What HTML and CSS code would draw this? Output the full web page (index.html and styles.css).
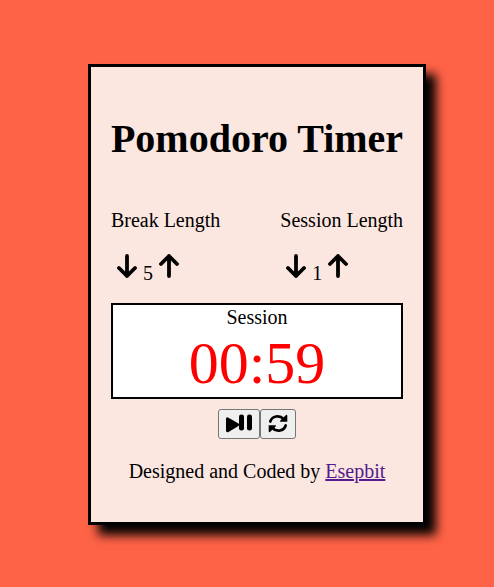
FILE: index.html
```html
<!DOCTYPE html>
<html lang="en">
<head>
<meta charset="utf-8">
<meta name="viewport" content="width=device-width, initial-scale=1">
<title>Pomodoro Timer</title>
<link rel="stylesheet" href="styles.css">
</head>
<body>
<main class="card">
  <h1 class="title">Pomodoro Timer</h1>
  <div class="settings">
    <section class="setting">
      <p class="label">Break Length</p>
      <div class="stepper">
        <button class="arrow" type="button" aria-label="Decrease break length"><svg viewBox="0 0 20 24"><path d="M10 2v20M2 14l8 8 8-8"/></svg></button>
        <span class="value">5</span>
        <button class="arrow" type="button" aria-label="Increase break length"><svg viewBox="0 0 20 24"><path d="M10 22V2M2 10l8-8 8 8"/></svg></button>
      </div>
    </section>
    <section class="setting">
      <p class="label">Session Length</p>
      <div class="stepper">
        <button class="arrow" type="button" aria-label="Decrease session length"><svg viewBox="0 0 20 24"><path d="M10 2v20M2 14l8 8 8-8"/></svg></button>
        <span class="value">1</span>
        <button class="arrow" type="button" aria-label="Increase session length"><svg viewBox="0 0 20 24"><path d="M10 22V2M2 10l8-8 8 8"/></svg></button>
      </div>
    </section>
  </div>
  <div class="display">
    <div class="phase">Session</div>
    <div class="time">00:59</div>
  </div>
  <div class="controls">
    <button class="control" type="button" aria-label="Start or pause"><svg class="play" viewBox="0 0 28 20"><path d="M1 5Q1 2.500 3.500 3.800L13.500 9.500Q15 10.700 13.500 12L3.500 18Q1 19 1 16.500Z"/><rect x="14" y=".5" width="5" height="16" rx="2.300"/><rect x="22" y=".5" width="5" height="16" rx="2.300"/></svg></button>
    <button class="control" type="button" aria-label="Reset"><svg class="reset" viewBox="0 0 20 20"><path class="arc" d="M2.300 7.500C4 2 11.500 .5 15.500 5M17.700 11.500C16 17 8.500 18.500 4.500 14"/><path d="M18.300.8Q19.300.8 19.300 1.800V7.700H12.500Q11.500 7.300 12.300 6.500ZM1.700 18.200Q.7 18.200 .7 17.200V11.300H7.500Q8.500 11.700 7.700 12.500Z"/></svg></button>
  </div>
  <p class="credit">Designed and Coded by <a href="#">Esepbit</a></p>
</main>
</body>
</html>
```
FILE: styles.css
```css
body {
  margin: 0;
  min-height: 100vh;
  display: flex;
  align-items: center;
  justify-content: center;
  box-sizing: border-box;
  padding: 2px 0 0 20px;
  background: #ff6347;
  color: #000;
  font: 20px/24px "Liberation Serif", "Times New Roman", serif;
}

.card {
  padding: 20px;
  border: 3px solid #000;
  background: #fbe6e0;
  box-shadow: 10px 10px 10px #000;
  text-align: center;
}

.title {
  margin: 28px 0 25px;
  font-size: 40px;
  line-height: 48px;
}

.settings {
  display: flex;
  justify-content: space-between;
}

.setting {
  text-align: left;
}

.label {
  margin: 20px 0;
}

.stepper {
  display: flex;
  align-items: flex-start;
  gap: 6px;
  height: 31px;
  padding-left: 6px;
  margin-bottom: 20px;
}

.arrow {
  display: block;
  padding: 0;
  border: 0;
  background: none;
  margin-top: 2px;
}

.arrow svg {
  display: block;
  width: 20px;
  height: 24px;
  fill: none;
  stroke: #000;
  stroke-width: 3.8;
  stroke-linecap: round;
  stroke-linejoin: round;
}

.value {
  margin-top: 9px;
}

.display {
  border: 2px solid #000;
  background: #fff;
}

.time {
  color: #f00;
  font-size: 60px;
  line-height: 68px;
}

.controls {
  display: flex;
  justify-content: center;
  margin-top: 10px;
}

.control {
  display: flex;
  align-items: center;
  justify-content: center;
  height: 30px;
  padding: 0 6px;
  border: 1px solid #767676;
  border-radius: 3px;
  background: #efefef;
}

.play {
  width: 28px;
  height: 20px;
}

.reset {
  width: 22px;
  height: 20px;
}

.arc {
  fill: none;
  stroke: #000;
  stroke-width: 2.7;
  stroke-linecap: round;
}

.credit {
  margin: 20px 0 19px;
}

a {
  color: #551a8b;
}
```
